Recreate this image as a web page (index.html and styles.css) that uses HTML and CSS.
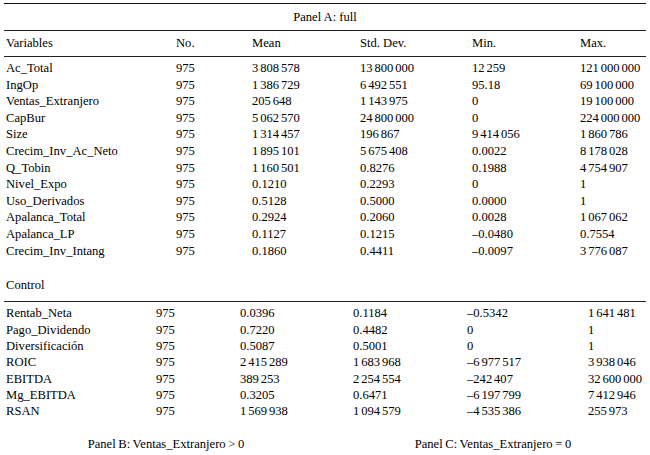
FILE: index.html
```html
<!DOCTYPE html>
<html>
<head>
<meta charset="utf-8">
<link rel="stylesheet" href="styles.css">
</head>
<body>
<div class="table">
  <div class="title">Panel A: full</div>
  <div class="row head cols-a">
    <span>Variables</span><span>No.</span><span>Mean</span><span>Std. Dev.</span><span>Min.</span><span>Max.</span>
  </div>
  <div class="body body-a">
    <div class="row cols-a"><span>Ac_Total</span><span>975</span><span>3 808 578</span><span>13 800 000</span><span>12 259</span><span>121 000 000</span></div>
    <div class="row cols-a"><span>IngOp</span><span>975</span><span>1 386 729</span><span>6 492 551</span><span>95.18</span><span>69 100 000</span></div>
    <div class="row cols-a"><span>Ventas_Extranjero</span><span>975</span><span>205 648</span><span>1 143 975</span><span>0</span><span>19 100 000</span></div>
    <div class="row cols-a"><span>CapBur</span><span>975</span><span>5 062 570</span><span>24 800 000</span><span>0</span><span>224 000 000</span></div>
    <div class="row cols-a"><span>Size</span><span>975</span><span>1 314 457</span><span>196 867</span><span>9 414 056</span><span>1 860 786</span></div>
    <div class="row cols-a"><span>Crecim_Inv_Ac_Neto</span><span>975</span><span>1 895 101</span><span>5 675 408</span><span>0.0022</span><span>8 178 028</span></div>
    <div class="row cols-a"><span>Q_Tobin</span><span>975</span><span>1 160 501</span><span>0.8276</span><span>0.1988</span><span>4 754 907</span></div>
    <div class="row cols-a"><span>Nivel_Expo</span><span>975</span><span>0.1210</span><span>0.2293</span><span>0</span><span>1</span></div>
    <div class="row cols-a"><span>Uso_Derivados</span><span>975</span><span>0.5128</span><span>0.5000</span><span>0.0000</span><span>1</span></div>
    <div class="row cols-a"><span>Apalanca_Total</span><span>975</span><span>0.2924</span><span>0.2060</span><span>0.0028</span><span>1 067 062</span></div>
    <div class="row cols-a"><span>Apalanca_LP</span><span>975</span><span>0.1127</span><span>0.1215</span><span>–0.0480</span><span>0.7554</span></div>
    <div class="row cols-a"><span>Crecim_Inv_Intang</span><span>975</span><span>0.1860</span><span>0.4411</span><span>–0.0097</span><span>3 776 087</span></div>
  </div>
  <div class="row section">Control</div>
  <div class="body body-c">
    <div class="row cols-c"><span>Rentab_Neta</span><span>975</span><span>0.0396</span><span>0.1184</span><span>–0.5342</span><span>1 641 481</span></div>
    <div class="row cols-c"><span>Pago_Dividendo</span><span>975</span><span>0.7220</span><span>0.4482</span><span>0</span><span>1</span></div>
    <div class="row cols-c"><span>Diversificación</span><span>975</span><span>0.5087</span><span>0.5001</span><span>0</span><span>1</span></div>
    <div class="row cols-c"><span>ROIC</span><span>975</span><span>2 415 289</span><span>1 683 968</span><span>–6 977 517</span><span>3 938 046</span></div>
    <div class="row cols-c"><span>EBITDA</span><span>975</span><span>389 253</span><span>2 254 554</span><span>–242 407</span><span>32 600 000</span></div>
    <div class="row cols-c"><span>Mg_EBITDA</span><span>975</span><span>0.3205</span><span>0.6471</span><span>–6 197 799</span><span>7 412 946</span></div>
    <div class="row cols-c"><span>RSAN</span><span>975</span><span>1 569 938</span><span>1 094 579</span><span>–4 535 386</span><span>255 973</span></div>
  </div>
  <div class="panels">
    <span class="panel-b">Panel B: Ventas_Extranjero &gt; 0</span>
    <span class="panel-c">Panel C: Ventas_Extranjero = 0</span>
  </div>
</div>
</body>
</html>
```

FILE: styles.css
```css
html, body {
  margin: 0;
  padding: 0;
  background: #ffffff;
}

body {
  font-family: "Liberation Serif", "Times New Roman", serif;
  font-size: 12.6px;
  color: #000000;
}

.table {
  width: 642px;
  margin: 3px 0 0 4px;
  border-top: 1.5px solid #111;
}

.title {
  height: 26px;
  line-height: 26px;
  text-align: center;
  border-bottom: 1px solid #222;
}

.row {
  display: grid;
  height: 16.6px;
  line-height: 16.6px;
  padding-left: 2px;
  white-space: nowrap;
}

.body .row span + span {
  word-spacing: -1.3px;
}

.head {
  height: 25px;
  line-height: 25px;
  border-bottom: 1px solid #222;
}

.cols-a {
  grid-template-columns: 170px 76px 108px 112px 108px 1fr;
}

.cols-c {
  grid-template-columns: 150px 84px 113px 114px 121px 1fr;
  height: 16.4px;
  line-height: 16.4px;
}

.body-a {
  padding-top: 3px;
}

.section {
  display: block;
  margin-top: 18px;
  height: 24px;
  line-height: 16.6px;
  border-bottom: 1px solid #222;
}

.body-c {
  padding-top: 3px;
}

.panels {
  display: grid;
  grid-template-columns: 324px 1fr;
  margin-top: 16px;
  height: 16.6px;
  line-height: 16.6px;
  word-spacing: -0.5px;
}

.panel-b {
  text-align: center;
}

.panel-c {
  text-align: center;
  padding-left: 12px;
}
```
